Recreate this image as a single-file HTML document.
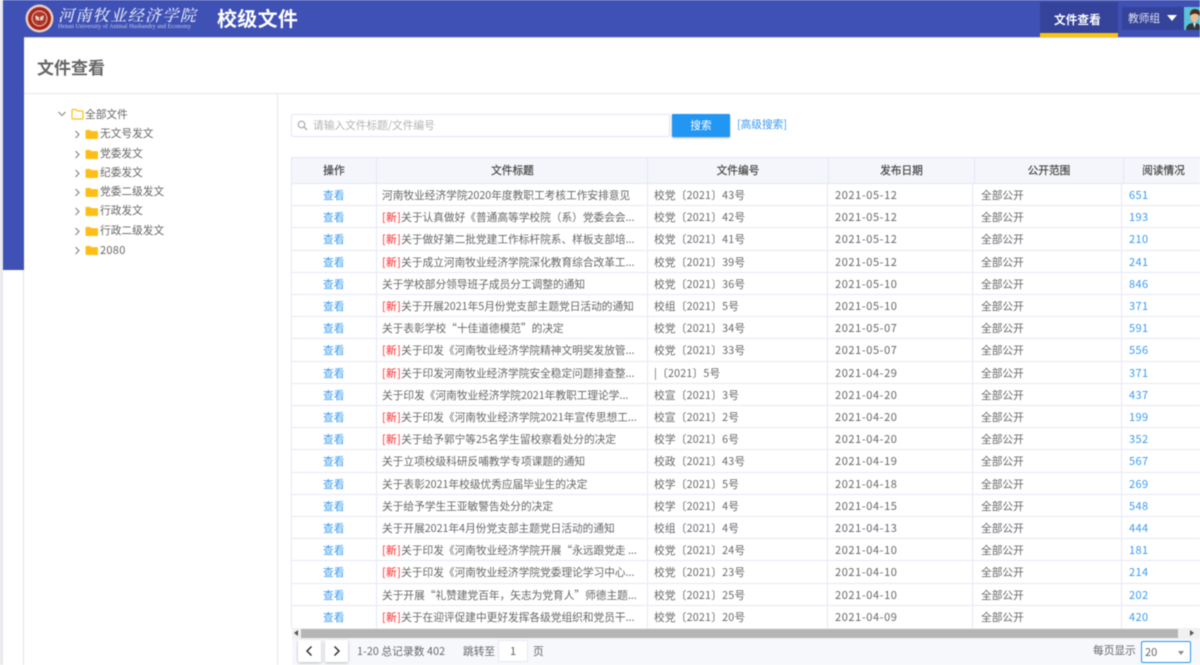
<!DOCTYPE html>
<html lang="zh-CN"><head><meta charset="utf-8"><title>校级文件</title>
<style>
*{box-sizing:border-box;margin:0;padding:0}
html,body{width:1200px;height:665px;overflow:hidden;background:#fff}
body{position:relative;font-family:"Noto Sans CJK SC","Liberation Sans",sans-serif;font-size:10.7px;color:#666}
.a{position:absolute;white-space:nowrap}
#page{position:absolute;left:0;top:0;width:1200px;height:665px;filter:blur(.4px)}
.tree{position:absolute;left:0;height:20px;line-height:20px;font-size:10.7px;color:#666;white-space:nowrap}
.tree svg{position:absolute}
.tree span{position:absolute;top:0;left:100px}
.row{position:absolute;left:292px;width:908px;height:22.2px;border-bottom:1px solid #e6e8f6;line-height:22px}
.row i{position:absolute;font-style:normal;top:1px;white-space:nowrap}
.c1{left:31px;color:#3a9bf0}.c2{left:90px}.c3{left:362px;letter-spacing:.2px}.row .c4{left:543px;top:0;font-size:11px;letter-spacing:.6px}.c5{left:689px}.row .c6{left:837px;top:0;color:#3a9bf0;font-size:11px;letter-spacing:.4px}
.row b{font-weight:400;color:#f22;letter-spacing:.4px}
.v{position:absolute;top:184px;height:444px;width:1px;background:#e6e8f6}
.h{position:absolute;top:157px;height:27px;line-height:27px;text-align:center;font-size:10.7px;color:#444;-webkit-text-stroke:.2px #444}
.hv{position:absolute;top:158px;height:25px;width:1px;background:#e3e6f6}
.btn{position:absolute;top:640px;width:23px;height:22px;background:#fff;box-shadow:0 1px 3px rgba(0,0,0,.25);border-radius:1px}
</style></head><body>
<div id="page">
<div class="a" style="left:3px;top:0;width:21px;height:270px;background:#3f51b5"></div>
<div class="a" style="left:0;top:0;width:3px;height:665px;background:#e8e8ee"></div>
<div class="a" style="left:23px;top:270px;width:1px;height:395px;background:#e4e4e8"></div>
<div class="a" style="left:3px;top:0;width:1197px;height:37px;background:#3f51b5"></div>
<div class="a" style="left:24px;top:37px;width:1176px;height:1px;background:#c8cdea"></div>

<svg class="a" style="left:25px;top:4px" width="29" height="29" viewBox="0 0 29 29"><circle cx="14.5" cy="14.5" r="14" fill="#e6cfc0"/><circle cx="14.5" cy="14.5" r="11.5" fill="#a8261c"/><circle cx="14.5" cy="14.5" r="7.5" fill="#b5382a" stroke="#e8c9b8" stroke-width="1"/><path d="M9.5 10.5c2 1 3.500 1 5 2.500 1.500-1.500 3-1.500 5-2.500l-1 6c-1.500 0-3 .5-4 1.500-1-1-2.500-1.500-4-1.500zM14.500 13v7" fill="#e8c9b8" stroke="#8a1d14" stroke-width=".7"/></svg>
<div class="a" style="left:58px;top:5px;font:italic 500 16px/20px 'Noto Serif CJK SC',serif;color:#e4e7f6;letter-spacing:1.4px">河南牧业经济学院</div>
<div class="a" style="left:58px;top:25px;font:400 5.900px/5px 'Liberation Serif',serif;color:#c9cfeb;letter-spacing:.1px">Henan University of Animal Husbandry and Economy</div>
<div class="a" style="left:217px;top:5px;font-size:20px;line-height:26px;font-weight:700;color:#fff;letter-spacing:.3px">校级文件</div>

<div class="a" style="left:1040px;top:2px;width:78px;height:31px;background:#35439a"></div>
<div class="a" style="left:1040px;top:33px;width:78px;height:4px;background:#fdc400"></div>
<div class="a" style="left:1054px;top:12px;font-size:11.700px;line-height:15px;color:#fff;font-weight:700">文件查看</div>
<div class="a" style="left:1122px;top:7px;width:62px;height:23px;background:#35439a"></div>
<div class="a" style="left:1128px;top:12px;font-size:10.700px;line-height:14px;color:#dfe2f3">教师组</div>
<div class="a" style="left:1167px;top:15px;width:0;height:0;border:5px solid transparent;border-top:6px solid #fff;border-bottom:0"></div>
<svg class="a" style="left:1184px;top:7px" width="16" height="23" viewBox="0 0 16 23"><rect width="16" height="23" fill="#59c4d8"/><path d="M2 23c0-5 3-7 8-7s6 2 6 4v3z" fill="#2f3a3d"/><path d="M9 16l1.500 5 1.500-5z" fill="#e8e8e8"/><ellipse cx="10.500" cy="10" rx="4" ry="5.500" fill="#e9bd98"/><path d="M6 9c-.5-5 2-7 5-7s5 2 5 4v3c-2-2-5-3-7-2-1.500.5-2.500 1-3 2z" fill="#4a2f1d"/></svg>

<div class="a" style="left:37px;top:56px;font-size:17px;line-height:22px;font-weight:700;color:#666">文件查看</div>
<div class="a" style="left:24px;top:93px;width:1176px;height:1px;background:#e3e5f3"></div>
<div class="a" style="left:277px;top:94px;width:1px;height:571px;background:#e3e5f3"></div>

<!-- tree -->
<svg class="a" style="left:57px;top:110px" width="10" height="8" viewBox="0 0 10 8"><path d="M1.500 2l3.500 3.500L8.500 2" fill="none" stroke="#999" stroke-width="1.300"/></svg>
<svg class="a" style="left:71px;top:108px" width="13" height="12" viewBox="0 0 13 12"><path d="M1 2.500q0-1 1-1h3l1.500 1.500h4.500q1 0 1 1v6q0 1-1 1H2q-1 0-1-1z" fill="#fff" stroke="#fdbf17" stroke-width="1.200"/></svg>
<div class="a" style="left:85px;top:108px;line-height:14px">全部文件</div>
<div class="tree" style="top:124px"><svg style="left:74px;top:6px" width="7" height="9" viewBox="0 0 7 9"><path d="M1.500 1l3.500 3.500L1.500 8" fill="none" stroke="#888" stroke-width="1.200"/></svg><svg style="left:85px;top:5px" width="13" height="10" viewBox="0 0 13 12" preserveAspectRatio="none"><path d="M.5 2q0-1 1-1h3.500l1.500 1.500h5.500q1 0 1 1V11q0 1-1 1h-10.500q-1 0-1-1z" fill="#fdbf17"/></svg><span>无文号发文</span></div>
<div class="tree" style="top:143.500px"><svg style="left:74px;top:6px" width="7" height="9" viewBox="0 0 7 9"><path d="M1.500 1l3.500 3.500L1.500 8" fill="none" stroke="#888" stroke-width="1.200"/></svg><svg style="left:85px;top:5px" width="13" height="10" viewBox="0 0 13 12" preserveAspectRatio="none"><path d="M.5 2q0-1 1-1h3.500l1.500 1.500h5.500q1 0 1 1V11q0 1-1 1h-10.500q-1 0-1-1z" fill="#fdbf17"/></svg><span>党委发文</span></div>
<div class="tree" style="top:163px"><svg style="left:74px;top:6px" width="7" height="9" viewBox="0 0 7 9"><path d="M1.500 1l3.500 3.500L1.500 8" fill="none" stroke="#888" stroke-width="1.200"/></svg><svg style="left:85px;top:5px" width="13" height="10" viewBox="0 0 13 12" preserveAspectRatio="none"><path d="M.5 2q0-1 1-1h3.500l1.500 1.500h5.500q1 0 1 1V11q0 1-1 1h-10.500q-1 0-1-1z" fill="#fdbf17"/></svg><span>纪委发文</span></div>
<div class="tree" style="top:182px"><svg style="left:74px;top:6px" width="7" height="9" viewBox="0 0 7 9"><path d="M1.500 1l3.500 3.500L1.500 8" fill="none" stroke="#888" stroke-width="1.200"/></svg><svg style="left:85px;top:5px" width="13" height="10" viewBox="0 0 13 12" preserveAspectRatio="none"><path d="M.5 2q0-1 1-1h3.500l1.500 1.500h5.500q1 0 1 1V11q0 1-1 1h-10.500q-1 0-1-1z" fill="#fdbf17"/></svg><span>党委二级发文</span></div>
<div class="tree" style="top:201px"><svg style="left:74px;top:6px" width="7" height="9" viewBox="0 0 7 9"><path d="M1.500 1l3.500 3.500L1.500 8" fill="none" stroke="#888" stroke-width="1.200"/></svg><svg style="left:85px;top:5px" width="13" height="10" viewBox="0 0 13 12" preserveAspectRatio="none"><path d="M.5 2q0-1 1-1h3.500l1.500 1.500h5.500q1 0 1 1V11q0 1-1 1h-10.500q-1 0-1-1z" fill="#fdbf17"/></svg><span>行政发文</span></div>
<div class="tree" style="top:220.500px"><svg style="left:74px;top:6px" width="7" height="9" viewBox="0 0 7 9"><path d="M1.500 1l3.500 3.500L1.500 8" fill="none" stroke="#888" stroke-width="1.200"/></svg><svg style="left:85px;top:5px" width="13" height="10" viewBox="0 0 13 12" preserveAspectRatio="none"><path d="M.5 2q0-1 1-1h3.500l1.500 1.500h5.500q1 0 1 1V11q0 1-1 1h-10.500q-1 0-1-1z" fill="#fdbf17"/></svg><span>行政二级发文</span></div>
<div class="tree" style="top:240px"><svg style="left:74px;top:6px" width="7" height="9" viewBox="0 0 7 9"><path d="M1.500 1l3.500 3.500L1.500 8" fill="none" stroke="#888" stroke-width="1.200"/></svg><svg style="left:85px;top:5px" width="13" height="10" viewBox="0 0 13 12" preserveAspectRatio="none"><path d="M.5 2q0-1 1-1h3.500l1.500 1.500h5.500q1 0 1 1V11q0 1-1 1h-10.500q-1 0-1-1z" fill="#fdbf17"/></svg><span style="font-size:11px;letter-spacing:.3px">2080</span></div>

<!-- search -->
<div class="a" style="left:291px;top:114px;width:379px;height:23px;border:1px solid #e3e5f6;border-radius:2px;background:#fff"></div>
<svg class="a" style="left:297px;top:120px" width="11" height="11" viewBox="0 0 11 11"><circle cx="4.500" cy="4.500" r="3.300" fill="none" stroke="#aaa" stroke-width="1.200"/><path d="M7 7l3 3" stroke="#aaa" stroke-width="1.300"/></svg>
<div class="a" style="left:313px;top:118px;line-height:15px;color:#b4b4b4">请输入文件标题/文件编号</div>
<div class="a" style="left:672px;top:114px;width:58px;height:23px;background:#2196f3;color:#fff;text-align:center;line-height:24px;box-shadow:0 1px 2px rgba(0,0,0,.3);border-radius:1px">搜索</div>
<div class="a" style="left:737px;top:117px;line-height:15px;color:#3a9bf0">[高级搜索]</div>

<!-- table header -->
<div class="a" style="left:291px;top:157px;width:909px;height:27px;background:#f5f6fb;border-top:1px solid #e3e6f6;border-bottom:1px solid #e3e6f6;border-left:1px solid #e3e6f6"></div>
<div class="h" style="left:292px;width:84px">操作</div>
<div class="h" style="left:377px;width:271px">文件标题</div>
<div class="h" style="left:648px;width:180px">文件编号</div>
<div class="h" style="left:829px;width:145px">发布日期</div>
<div class="h" style="left:975px;width:148px">公开范围</div>
<div class="h" style="left:1124px;width:76px;padding-left:3px">阅读情况</div>
<div class="hv" style="left:376px"></div><div class="hv" style="left:647px"></div><div class="hv" style="left:828px"></div><div class="hv" style="left:974px"></div><div class="hv" style="left:1123px"></div>

<!-- rows -->
<div class="row" style="top:184px"><i class="c1">查看</i><i class="c2">河南牧业经济学院2020年度教职工考核工作安排意见</i><i class="c3">校党〔2021〕43号</i><i class="c4">2021-05-12</i><i class="c5">全部公开</i><i class="c6">651</i></div>
<div class="row" style="top:206.200px"><i class="c1">查看</i><i class="c2"><b>[新]</b>关于认真做好《普通高等学校院（系）党委会会...</i><i class="c3">校党〔2021〕42号</i><i class="c4">2021-05-12</i><i class="c5">全部公开</i><i class="c6">193</i></div>
<div class="row" style="top:228.400px"><i class="c1">查看</i><i class="c2"><b>[新]</b>关于做好第二批党建工作标杆院系、样板支部培...</i><i class="c3">校党〔2021〕41号</i><i class="c4">2021-05-12</i><i class="c5">全部公开</i><i class="c6">210</i></div>
<div class="row" style="top:250.600px"><i class="c1">查看</i><i class="c2"><b>[新]</b>关于成立河南牧业经济学院深化教育综合改革工...</i><i class="c3">校党〔2021〕39号</i><i class="c4">2021-05-12</i><i class="c5">全部公开</i><i class="c6">241</i></div>
<div class="row" style="top:272.800px"><i class="c1">查看</i><i class="c2">关于学校部分领导班子成员分工调整的通知</i><i class="c3">校党〔2021〕36号</i><i class="c4">2021-05-10</i><i class="c5">全部公开</i><i class="c6">846</i></div>
<div class="row" style="top:295px"><i class="c1">查看</i><i class="c2"><b>[新]</b>关于开展2021年5月份党支部主题党日活动的通知</i><i class="c3">校组〔2021〕5号</i><i class="c4">2021-05-10</i><i class="c5">全部公开</i><i class="c6">371</i></div>
<div class="row" style="top:317.200px"><i class="c1">查看</i><i class="c2">关于表彰学校“十佳道德模范”的决定</i><i class="c3">校党〔2021〕34号</i><i class="c4">2021-05-07</i><i class="c5">全部公开</i><i class="c6">591</i></div>
<div class="row" style="top:339.400px"><i class="c1">查看</i><i class="c2"><b>[新]</b>关于印发《河南牧业经济学院精神文明奖发放管...</i><i class="c3">校党〔2021〕33号</i><i class="c4">2021-05-07</i><i class="c5">全部公开</i><i class="c6">556</i></div>
<div class="row" style="top:361.600px"><i class="c1">查看</i><i class="c2"><b>[新]</b>关于印发河南牧业经济学院安全稳定问题排查整...</i><i class="c3">|〔2021〕5号</i><i class="c4">2021-04-29</i><i class="c5">全部公开</i><i class="c6">371</i></div>
<div class="row" style="top:383.800px"><i class="c1">查看</i><i class="c2">关于印发《河南牧业经济学院2021年教职工理论学...</i><i class="c3">校宣〔2021〕3号</i><i class="c4">2021-04-20</i><i class="c5">全部公开</i><i class="c6">437</i></div>
<div class="row" style="top:406px"><i class="c1">查看</i><i class="c2"><b>[新]</b>关于印发《河南牧业经济学院2021年宣传思想工...</i><i class="c3">校宣〔2021〕2号</i><i class="c4">2021-04-20</i><i class="c5">全部公开</i><i class="c6">199</i></div>
<div class="row" style="top:428.200px"><i class="c1">查看</i><i class="c2"><b>[新]</b>关于给予郭宁等25名学生留校察看处分的决定</i><i class="c3">校学〔2021〕6号</i><i class="c4">2021-04-20</i><i class="c5">全部公开</i><i class="c6">352</i></div>
<div class="row" style="top:450.400px"><i class="c1">查看</i><i class="c2">关于立项校级科研反哺教学专项课题的通知</i><i class="c3">校政〔2021〕43号</i><i class="c4">2021-04-19</i><i class="c5">全部公开</i><i class="c6">567</i></div>
<div class="row" style="top:472.600px"><i class="c1">查看</i><i class="c2">关于表彰2021年校级优秀应届毕业生的决定</i><i class="c3">校学〔2021〕5号</i><i class="c4">2021-04-18</i><i class="c5">全部公开</i><i class="c6">269</i></div>
<div class="row" style="top:494.800px"><i class="c1">查看</i><i class="c2">关于给予学生王亚敏警告处分的决定</i><i class="c3">校学〔2021〕4号</i><i class="c4">2021-04-15</i><i class="c5">全部公开</i><i class="c6">548</i></div>
<div class="row" style="top:517px"><i class="c1">查看</i><i class="c2">关于开展2021年4月份党支部主题党日活动的通知</i><i class="c3">校组〔2021〕4号</i><i class="c4">2021-04-13</i><i class="c5">全部公开</i><i class="c6">444</i></div>
<div class="row" style="top:539.200px"><i class="c1">查看</i><i class="c2"><b>[新]</b>关于印发《河南牧业经济学院开展“永远跟党走 ...</i><i class="c3">校党〔2021〕24号</i><i class="c4">2021-04-10</i><i class="c5">全部公开</i><i class="c6">181</i></div>
<div class="row" style="top:561.400px"><i class="c1">查看</i><i class="c2"><b>[新]</b>关于印发《河南牧业经济学院党委理论学习中心...</i><i class="c3">校党〔2021〕23号</i><i class="c4">2021-04-10</i><i class="c5">全部公开</i><i class="c6">214</i></div>
<div class="row" style="top:583.600px"><i class="c1">查看</i><i class="c2">关于开展“礼赞建党百年，矢志为党育人”师德主题...</i><i class="c3">校党〔2021〕25号</i><i class="c4">2021-04-10</i><i class="c5">全部公开</i><i class="c6">202</i></div>
<div class="row" style="top:605.800px;border-bottom:0"><i class="c1">查看</i><i class="c2"><b>[新]</b>关于在迎评促建中更好发挥各级党组织和党员干...</i><i class="c3">校党〔2021〕20号</i><i class="c4">2021-04-09</i><i class="c5">全部公开</i><i class="c6">420</i></div>
<div class="v" style="left:291px"></div><div class="v" style="left:376px"></div><div class="v" style="left:647px"></div><div class="v" style="left:827px"></div><div class="v" style="left:972px"></div><div class="v" style="left:1121px"></div>

<!-- scrollbar -->
<div class="a" style="left:292px;top:628px;width:908px;height:11px;background:#f1f1f1"></div>
<div class="a" style="left:301px;top:629px;width:877px;height:9px;background:#b5b5b5"></div>
<div class="a" style="left:294px;top:630px;width:0;height:0;border:3.500px solid transparent;border-right:4px solid #555;border-left:0"></div>
<div class="a" style="left:1190px;top:630px;width:0;height:0;border:3.500px solid transparent;border-left:4px solid #555;border-right:0"></div>
<!-- footer -->
<div class="a" style="left:292px;top:639px;width:908px;height:26px;background:#f7f8fc"></div>
<div class="btn" style="left:298px"><svg style="position:absolute;left:7px;top:5px" width="9" height="12" viewBox="0 0 9 12"><path d="M6.500 1.500L2 6l4.500 4.500" fill="none" stroke="#333" stroke-width="1.500"/></svg></div>
<div class="btn" style="left:325px"><svg style="position:absolute;left:7px;top:5px" width="9" height="12" viewBox="0 0 9 12"><path d="M2.500 1.500L7 6l-4.500 4.500" fill="none" stroke="#333" stroke-width="1.500"/></svg></div>
<div class="a" style="left:357px;top:644px;line-height:15px;font-size:10.700px;letter-spacing:.1px">1-20 总记录数 402</div>
<div class="a" style="left:463px;top:644px;line-height:15px">跳转至</div>
<div class="a" style="left:498px;top:640px;width:30px;height:22px;background:#fff;border:1px solid #e6e8f6;text-align:center;line-height:21px;font-size:11px">1</div>
<div class="a" style="left:533px;top:644px;line-height:15px">页</div>
<div class="a" style="left:1093px;top:643px;line-height:15px">每页显示</div>
<div class="a" style="left:1141px;top:641px;width:50px;height:22px;background:#fff;border:1.500px solid #2196f3;border-radius:2px;line-height:20px;padding-left:3px;font-size:11px">20</div>
<div class="a" style="left:1178px;top:651px;width:0;height:0;border:3.500px solid transparent;border-top:4px solid #888;border-bottom:0"></div>
</div>
</body></html>
